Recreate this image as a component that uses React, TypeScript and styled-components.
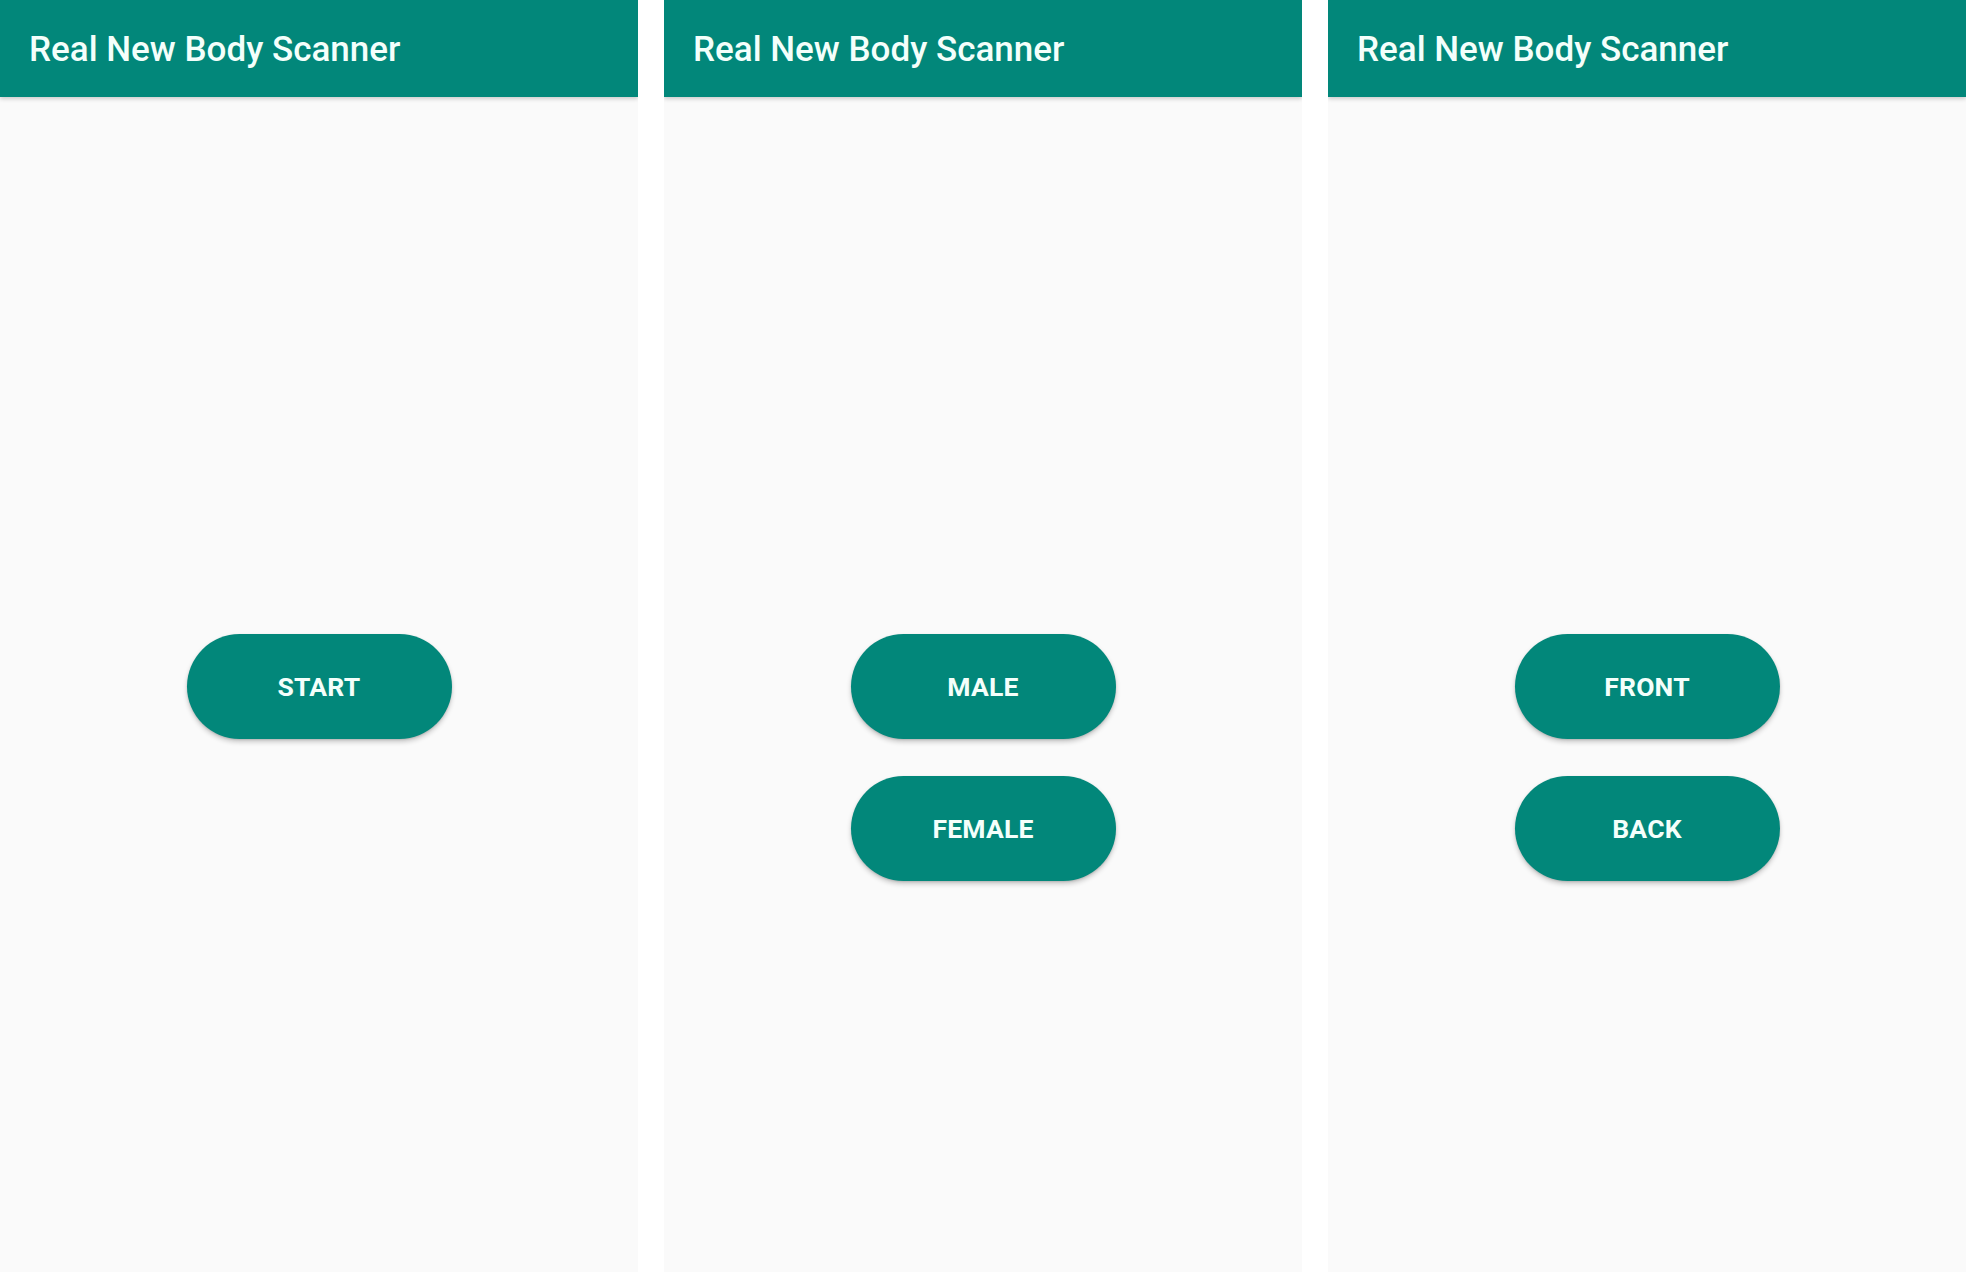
import React from "react";
import styled, { createGlobalStyle } from "styled-components";

const GlobalStyle = createGlobalStyle`
  html, body {
    margin: 0;
    padding: 0;
    background: #ffffff;
    font-family: Roboto, "Noto Sans", "Liberation Sans", sans-serif;
  }
  #root {
    width: 1974px;
    height: 1280px;
  }
`;

const Screens = styled.div`
  display: grid;
  grid-template-columns: 638px 638px 638px;
  column-gap: 26px;
  height: 1272px;
  padding-left: 1px;
  margin-left: -1px;
  background: #ffffff;
`;

const Phone = styled.section`
  display: flex;
  flex-direction: column;
  background: #fafafa;
  overflow: hidden;
`;

const AppBar = styled.header`
  display: flex;
  align-items: center;
  height: 97px;
  padding-left: 29px;
  background: #02877a;
  box-shadow: 0 2px 4px rgba(0, 0, 0, 0.18);
  position: relative;
  z-index: 1;
  flex-shrink: 0;
`;

const Title = styled.h1`
  margin: 0;
  padding-top: 2px;
  color: #f4fffb;
  font-family: Roboto, "Noto Sans", sans-serif;
  font-weight: 500;
  font-size: 35px;
  letter-spacing: 0;
`;

const Content = styled.main`
  flex: 1;
  display: grid;
  grid-template-rows: 1fr auto 1fr;
  justify-items: center;
  padding-top: 3px;
`;

const Extra = styled.div`
  display: flex;
  flex-direction: column;
  align-items: center;
  padding-top: 37px;
`;

const Pill = styled.button`
  width: 265px;
  height: 105px;
  border: none;
  border-radius: 53px;
  background: #02877a;
  color: #f4fffb;
  font-family: Roboto, "Noto Sans", sans-serif;
  font-weight: 700;
  font-size: 26.5px;
  letter-spacing: 0.2px;
  box-shadow: 0 3px 5px rgba(0, 0, 0, 0.2), 0 1px 2px rgba(0, 0, 0, 0.12);
  cursor: pointer;
`;

type ScreenProps = { main: string; extra?: string };

const Screen: React.FC<ScreenProps> = ({ main, extra }) => (
  <Phone>
    <AppBar>
      <Title>Real New Body Scanner</Title>
    </AppBar>
    <Content>
      <div />
      <Pill>{main}</Pill>
      <Extra>{extra && <Pill>{extra}</Pill>}</Extra>
    </Content>
  </Phone>
);

export default function App() {
  return (
    <>
      <GlobalStyle />
      <Screens>
        <Screen main="START" />
        <Screen main="MALE" extra="FEMALE" />
        <Screen main="FRONT" extra="BACK" />
      </Screens>
    </>
  );
}
